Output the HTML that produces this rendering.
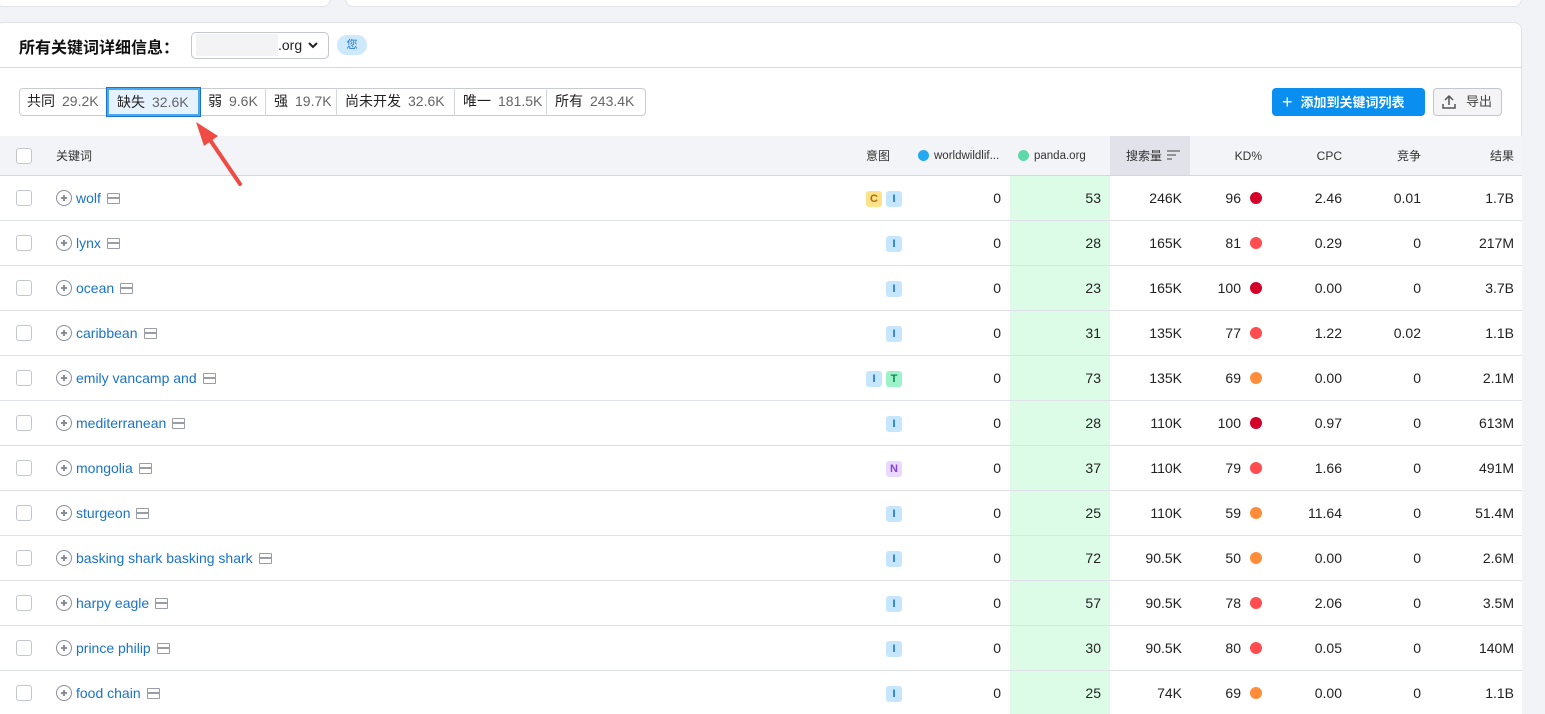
<!DOCTYPE html>
<html><head><meta charset="utf-8"><style>
*{box-sizing:border-box;margin:0;padding:0}
html,body{width:1545px;height:714px;overflow:hidden}
body{background:#f2f3f7;font-family:"Liberation Sans","Noto Sans CJK SC",sans-serif;color:#222;font-size:14px;position:relative}
.card{position:absolute;background:#fff;border:1px solid #e2e3ea;border-radius:8px}
.abs{position:absolute}
.row{position:absolute;left:0;width:1522px;height:45px;border-bottom:1px solid #e0e1e8;background:#fff}
.c{position:absolute;top:0;height:44px;line-height:44px;text-align:right;font-size:14px;color:#222}
.cb{position:absolute;left:16px;top:14px;width:16px;height:16px;border:1px solid #c4c6cf;border-radius:3px;background:#fff}
.kw{position:absolute;left:56px;top:0;line-height:44px;color:#1a73c9;font-size:14px;white-space:nowrap}
.plus{display:inline-block;width:16px;height:16px;border:1.3px solid #8a8d99;border-radius:50%;vertical-align:-3px;margin-right:4px;position:relative}
.plus:before{content:"";position:absolute;left:3.5px;top:6.3px;width:6.5px;height:1.3px;background:#8a8d99}
.plus:after{content:"";position:absolute;left:6.3px;top:3.5px;width:1.3px;height:6.5px;background:#8a8d99}
.ser{display:inline-block;width:13px;height:11px;border:1.5px solid #9a9ca6;border-radius:1px;vertical-align:-1px;margin-left:6px;position:relative}
.ser:after{content:"";position:absolute;left:0;right:0;top:3px;height:1.5px;background:#9a9ca6}
.tag{display:inline-block;width:16px;height:16px;line-height:16px;border-radius:3px;font-size:11px;font-weight:bold;text-align:center;margin-left:4px;vertical-align:1px}
.tI{background:#c5e6fd;color:#1a73c9}.tC{background:#fde28b;color:#b06a00}.tT{background:#9ef2c9;color:#0b8a58}.tN{background:#ead9ff;color:#8a3fe0}
.dot{position:absolute;top:16px;width:12px;height:12px;border-radius:50%}
.th{position:absolute;top:0;height:40px;line-height:40px;font-size:12px;color:#333;text-align:right}
.seg{position:absolute;top:88px;height:28px;line-height:26px;font-size:14px;color:#222;padding:0 8px;border-right:1px solid #d5d7de;white-space:nowrap}
.seg span{color:#666;margin-left:7px}
</style></head><body>
<div class="card" style="left:-5px;top:-10px;width:336px;height:17px"></div>
<div class="card" style="left:345px;top:-10px;width:1177px;height:17px"></div>
<div class="card" style="left:-5px;top:22px;width:1527px;height:700px;overflow:hidden"></div>
<div class="abs" style="left:19px;top:34px;font-size:16px;font-weight:bold;color:#111">所有关键词详细信息：</div>
<div class="abs" style="left:191px;top:32px;width:138px;height:27px;border:1px solid #c4c6cf;border-radius:5px;background:#fff"></div>
<div class="abs" style="left:196px;top:34px;width:82px;height:22px;background:#f3f3f5"></div>
<div class="abs" style="left:278px;top:37px;font-size:14px;color:#222">.org</div>
<svg class="abs" style="left:307px;top:40px" width="12" height="10"><path d="M2 3l4 4 4-4" stroke="#222" stroke-width="2" fill="none"/></svg>
<div class="abs" style="left:337px;top:35px;width:30px;height:20px;border-radius:10px;background:#cde9fb;color:#1a73c9;font-size:11px;text-align:center;line-height:20px">您</div>
<div class="abs" style="left:0;top:67px;width:1522px;height:1px;background:#d5d7de"></div>

<div class="abs" style="left:19px;top:88px;width:627px;height:28px;border:1px solid #c9cbd3;border-radius:4px"></div>
<div class="seg" style="left:19px;width:88px">共同<span>29.2K</span></div>
<div class="seg" style="left:107px;width:93px;background:#e6f2fd;border:2px solid #4aa8f0;outline:1px solid #1a73c9;line-height:24px">缺失<span>32.6K</span></div>
<div class="seg" style="left:200px;width:66px">弱<span>9.6K</span></div>
<div class="seg" style="left:266px;width:71px">强<span>19.7K</span></div>
<div class="seg" style="left:337px;width:118px">尚未开发<span>32.6K</span></div>
<div class="seg" style="left:455px;width:92px">唯一<span>181.5K</span></div>
<div class="seg" style="left:547px;width:99px;border-right:none">所有<span>243.4K</span></div>

<div class="abs" style="left:1272px;top:88px;width:153px;height:28px;border-radius:4px;background:#0a8ff0;color:#fff;font-weight:bold;font-size:13px;line-height:28px;padding-left:10px"><span style="font-size:18px;font-weight:normal;vertical-align:-1px;margin-right:8px">+</span>添加到关键词列表</div>
<div class="abs" style="left:1433px;top:88px;width:69px;height:28px;border-radius:4px;border:1px solid #c4c6cf;background:#f4f4f6;color:#444;font-size:13px;line-height:26px;padding-left:32px">导出</div>
<svg class="abs" style="left:1441px;top:94px" width="16" height="16"><path d="M8 11V2M4 6l4-4 4 4M2 10v4h12v-4" stroke="#555" stroke-width="1.5" fill="none"/></svg>

<div class="abs" style="left:0;top:136px;width:1522px;height:40px;background:#f3f4f8;border-bottom:1px solid #d5d7de"></div>
<div class="abs" style="left:1110px;top:136px;width:80px;height:39px;background:#e1e2ea"></div>
<div class="cb" style="top:148px"></div>
<div class="th abs" style="top:136px;left:56px;text-align:left">关键词</div>
<div class="th abs" style="top:136px;left:850px;width:40px">意图</div>
<div class="abs" style="top:150px;left:918px;width:11px;height:11px;border-radius:50%;background:#23a8f2"></div>
<div class="th abs" style="top:136px;left:934px;text-align:left;font-size:11.5px">worldwildlif...</div>
<div class="abs" style="top:150px;left:1018px;width:11px;height:11px;border-radius:50%;background:#5ed9a8"></div>
<div class="th abs" style="top:136px;left:1034px;text-align:left;font-size:11.5px">panda.org</div>
<div class="th abs" style="top:136px;left:1110px;width:52px">搜索量</div>
<svg class="abs" style="left:1167px;top:150px" width="13" height="11"><path d="M0 1h13M0 5h9M0 9h5" stroke="#777" stroke-width="1.5"/></svg>
<div class="th abs" style="top:136px;left:1190px;width:72px">KD%</div>
<div class="th abs" style="top:136px;left:1270px;width:72px">CPC</div>
<div class="th abs" style="top:136px;left:1350px;width:71px">竞争</div>
<div class="th abs" style="top:136px;left:1430px;width:84px">结果</div>

<div class="row" style="top:176px"><div class="cb"></div><div class="kw"><span class="plus"></span>wolf<span class="ser"></span></div><div class="c" style="left:850px;width:52px"><span class="tag tC">C</span><span class="tag tI">I</span></div><div class="c" style="left:910px;width:91px">0</div><div class="c" style="left:1010px;width:100px;background:#dcfce8;padding-right:9px">53</div><div class="c" style="left:1110px;width:72px">246K</div><div class="c" style="left:1190px;width:51px">96</div><div class="dot" style="left:1250px;background:#d4002a"></div><div class="c" style="left:1270px;width:72px">2.46</div><div class="c" style="left:1350px;width:71px">0.01</div><div class="c" style="left:1430px;width:84px">1.7B</div></div>
<div class="row" style="top:221px"><div class="cb"></div><div class="kw"><span class="plus"></span>lynx<span class="ser"></span></div><div class="c" style="left:850px;width:52px"><span class="tag tI">I</span></div><div class="c" style="left:910px;width:91px">0</div><div class="c" style="left:1010px;width:100px;background:#dcfce8;padding-right:9px">28</div><div class="c" style="left:1110px;width:72px">165K</div><div class="c" style="left:1190px;width:51px">81</div><div class="dot" style="left:1250px;background:#ff4d4f"></div><div class="c" style="left:1270px;width:72px">0.29</div><div class="c" style="left:1350px;width:71px">0</div><div class="c" style="left:1430px;width:84px">217M</div></div>
<div class="row" style="top:266px"><div class="cb"></div><div class="kw"><span class="plus"></span>ocean<span class="ser"></span></div><div class="c" style="left:850px;width:52px"><span class="tag tI">I</span></div><div class="c" style="left:910px;width:91px">0</div><div class="c" style="left:1010px;width:100px;background:#dcfce8;padding-right:9px">23</div><div class="c" style="left:1110px;width:72px">165K</div><div class="c" style="left:1190px;width:51px">100</div><div class="dot" style="left:1250px;background:#d4002a"></div><div class="c" style="left:1270px;width:72px">0.00</div><div class="c" style="left:1350px;width:71px">0</div><div class="c" style="left:1430px;width:84px">3.7B</div></div>
<div class="row" style="top:311px"><div class="cb"></div><div class="kw"><span class="plus"></span>caribbean<span class="ser"></span></div><div class="c" style="left:850px;width:52px"><span class="tag tI">I</span></div><div class="c" style="left:910px;width:91px">0</div><div class="c" style="left:1010px;width:100px;background:#dcfce8;padding-right:9px">31</div><div class="c" style="left:1110px;width:72px">135K</div><div class="c" style="left:1190px;width:51px">77</div><div class="dot" style="left:1250px;background:#ff4d4f"></div><div class="c" style="left:1270px;width:72px">1.22</div><div class="c" style="left:1350px;width:71px">0.02</div><div class="c" style="left:1430px;width:84px">1.1B</div></div>
<div class="row" style="top:356px"><div class="cb"></div><div class="kw"><span class="plus"></span>emily vancamp and<span class="ser"></span></div><div class="c" style="left:850px;width:52px"><span class="tag tI">I</span><span class="tag tT">T</span></div><div class="c" style="left:910px;width:91px">0</div><div class="c" style="left:1010px;width:100px;background:#dcfce8;padding-right:9px">73</div><div class="c" style="left:1110px;width:72px">135K</div><div class="c" style="left:1190px;width:51px">69</div><div class="dot" style="left:1250px;background:#ff8c3b"></div><div class="c" style="left:1270px;width:72px">0.00</div><div class="c" style="left:1350px;width:71px">0</div><div class="c" style="left:1430px;width:84px">2.1M</div></div>
<div class="row" style="top:401px"><div class="cb"></div><div class="kw"><span class="plus"></span>mediterranean<span class="ser"></span></div><div class="c" style="left:850px;width:52px"><span class="tag tI">I</span></div><div class="c" style="left:910px;width:91px">0</div><div class="c" style="left:1010px;width:100px;background:#dcfce8;padding-right:9px">28</div><div class="c" style="left:1110px;width:72px">110K</div><div class="c" style="left:1190px;width:51px">100</div><div class="dot" style="left:1250px;background:#d4002a"></div><div class="c" style="left:1270px;width:72px">0.97</div><div class="c" style="left:1350px;width:71px">0</div><div class="c" style="left:1430px;width:84px">613M</div></div>
<div class="row" style="top:446px"><div class="cb"></div><div class="kw"><span class="plus"></span>mongolia<span class="ser"></span></div><div class="c" style="left:850px;width:52px"><span class="tag tN">N</span></div><div class="c" style="left:910px;width:91px">0</div><div class="c" style="left:1010px;width:100px;background:#dcfce8;padding-right:9px">37</div><div class="c" style="left:1110px;width:72px">110K</div><div class="c" style="left:1190px;width:51px">79</div><div class="dot" style="left:1250px;background:#ff4d4f"></div><div class="c" style="left:1270px;width:72px">1.66</div><div class="c" style="left:1350px;width:71px">0</div><div class="c" style="left:1430px;width:84px">491M</div></div>
<div class="row" style="top:491px"><div class="cb"></div><div class="kw"><span class="plus"></span>sturgeon<span class="ser"></span></div><div class="c" style="left:850px;width:52px"><span class="tag tI">I</span></div><div class="c" style="left:910px;width:91px">0</div><div class="c" style="left:1010px;width:100px;background:#dcfce8;padding-right:9px">25</div><div class="c" style="left:1110px;width:72px">110K</div><div class="c" style="left:1190px;width:51px">59</div><div class="dot" style="left:1250px;background:#ff8c3b"></div><div class="c" style="left:1270px;width:72px">11.64</div><div class="c" style="left:1350px;width:71px">0</div><div class="c" style="left:1430px;width:84px">51.4M</div></div>
<div class="row" style="top:536px"><div class="cb"></div><div class="kw"><span class="plus"></span>basking shark basking shark<span class="ser"></span></div><div class="c" style="left:850px;width:52px"><span class="tag tI">I</span></div><div class="c" style="left:910px;width:91px">0</div><div class="c" style="left:1010px;width:100px;background:#dcfce8;padding-right:9px">72</div><div class="c" style="left:1110px;width:72px">90.5K</div><div class="c" style="left:1190px;width:51px">50</div><div class="dot" style="left:1250px;background:#ff8c3b"></div><div class="c" style="left:1270px;width:72px">0.00</div><div class="c" style="left:1350px;width:71px">0</div><div class="c" style="left:1430px;width:84px">2.6M</div></div>
<div class="row" style="top:581px"><div class="cb"></div><div class="kw"><span class="plus"></span>harpy eagle<span class="ser"></span></div><div class="c" style="left:850px;width:52px"><span class="tag tI">I</span></div><div class="c" style="left:910px;width:91px">0</div><div class="c" style="left:1010px;width:100px;background:#dcfce8;padding-right:9px">57</div><div class="c" style="left:1110px;width:72px">90.5K</div><div class="c" style="left:1190px;width:51px">78</div><div class="dot" style="left:1250px;background:#ff4d4f"></div><div class="c" style="left:1270px;width:72px">2.06</div><div class="c" style="left:1350px;width:71px">0</div><div class="c" style="left:1430px;width:84px">3.5M</div></div>
<div class="row" style="top:626px"><div class="cb"></div><div class="kw"><span class="plus"></span>prince philip<span class="ser"></span></div><div class="c" style="left:850px;width:52px"><span class="tag tI">I</span></div><div class="c" style="left:910px;width:91px">0</div><div class="c" style="left:1010px;width:100px;background:#dcfce8;padding-right:9px">30</div><div class="c" style="left:1110px;width:72px">90.5K</div><div class="c" style="left:1190px;width:51px">80</div><div class="dot" style="left:1250px;background:#ff4d4f"></div><div class="c" style="left:1270px;width:72px">0.05</div><div class="c" style="left:1350px;width:71px">0</div><div class="c" style="left:1430px;width:84px">140M</div></div>
<div class="row" style="top:671px"><div class="cb"></div><div class="kw"><span class="plus"></span>food chain<span class="ser"></span></div><div class="c" style="left:850px;width:52px"><span class="tag tI">I</span></div><div class="c" style="left:910px;width:91px">0</div><div class="c" style="left:1010px;width:100px;background:#dcfce8;padding-right:9px">25</div><div class="c" style="left:1110px;width:72px">74K</div><div class="c" style="left:1190px;width:51px">69</div><div class="dot" style="left:1250px;background:#ff8c3b"></div><div class="c" style="left:1270px;width:72px">0.00</div><div class="c" style="left:1350px;width:71px">0</div><div class="c" style="left:1430px;width:84px">1.1B</div></div>

<svg class="abs" style="left:0;top:0" width="300" height="200"><path d="M240 184L206 134" stroke="#f04a45" stroke-width="4" stroke-linecap="round"/><path d="M196 122L218 136L204 146Z" fill="#f04a45"/></svg>
</body></html>
